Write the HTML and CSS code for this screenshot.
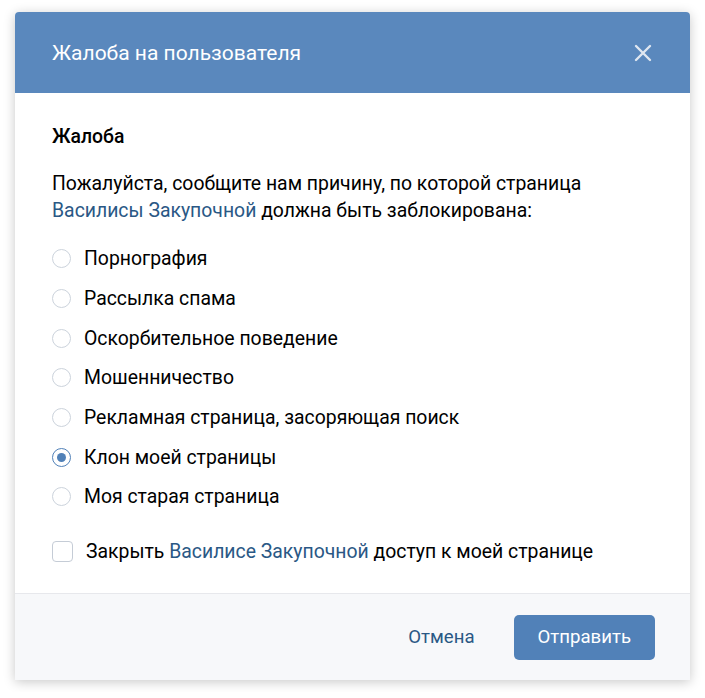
FILE: index.html
```html
<!DOCTYPE html>
<html lang="ru">

<head>
    <meta charset="UTF-8">
    <meta name="viewport" content="width=device-width, initial-scale=1.0">
    <title>Жалоба на пользователя</title>
    <link rel="stylesheet" href="styles.css">
</head>

<body>
    <div class="modal">
        <div class="modal-header">
            <h1>Жалоба на пользователя</h1>
            <button class="close" type="button" aria-label="Закрыть">
                <svg width="18" height="18" viewBox="0 0 18 18">
                    <path d="M2 2L16 16M16 2L2 16" stroke="#dfe7f1" stroke-width="2.4" stroke-linecap="round" />
                </svg>
            </button>
        </div>

        <div class="modal-body">
            <h2>Жалоба</h2>
            <p class="lead">
                Пожалуйста, сообщите нам причину, по которой страница
                <a href="#">Василисы Закупочной</a> должна быть заблокирована:
            </p>

            <form class="reasons">
                <label class="radio"><input type="radio" name="reason"><span class="dot"></span>Порнография</label>
                <label class="radio"><input type="radio" name="reason"><span class="dot"></span>Рассылка спама</label>
                <label class="radio"><input type="radio" name="reason"><span class="dot"></span>Оскорбительное поведение</label>
                <label class="radio"><input type="radio" name="reason"><span class="dot"></span>Мошенничество</label>
                <label class="radio"><input type="radio" name="reason"><span class="dot"></span>Рекламная страница, засоряющая поиск</label>
                <label class="radio"><input type="radio" name="reason" checked><span class="dot"></span>Клон моей страницы</label>
                <label class="radio"><input type="radio" name="reason"><span class="dot"></span>Моя старая страница</label>

                <label class="check"><input type="checkbox"><span class="box"></span>Закрыть&nbsp;<a href="#">Василисе Закупочной</a>&nbsp;доступ к моей странице</label>
            </form>
        </div>

        <div class="modal-footer">
            <button class="btn-link" type="button">Отмена</button>
            <button class="btn" type="button">Отправить</button>
        </div>
    </div>
</body>

</html>
```

FILE: styles.css
```css
body {
    margin: 0;
    padding: 12px 15px;
    background-color: #fff;
    font-family: Roboto, "Noto Sans", Arial, sans-serif;
    color: #000;
}

a {
    color: #2a5885;
    text-decoration: none;
}

.modal {
    width: 675px;
    height: 668px;
    display: flex;
    flex-direction: column;
    background: #fff;
    border-radius: 4px 4px 0 0;
    box-shadow: 0 2px 12px rgba(0, 0, 0, 0.22);
}

.modal-header {
    height: 81px;
    display: flex;
    align-items: center;
    justify-content: space-between;
    padding: 0 29px 0 37px;
    background-color: #5a88bd;
    border-radius: 4px 4px 0 0;
}

.modal-header h1 {
    margin: 0;
    font-size: 21px;
    font-weight: 400;
    color: #fff;
}

.close {
    width: 36px;
    height: 36px;
    display: flex;
    align-items: center;
    justify-content: center;
    padding: 0;
    border: none;
    background: none;
    cursor: pointer;
}

.modal-body {
    flex: 1;
    padding: 33px 37px 0;
}

.modal-body h2 {
    margin: 0;
    font-size: 19.4px;
    font-weight: 500;
    line-height: 22px;
}

.lead {
    margin: 22px 0 0;
    font-size: 19.4px;
    line-height: 27px;
}

.reasons {
    margin-top: 15px;
    display: flex;
    flex-direction: column;
}

.radio,
.check {
    display: flex;
    align-items: center;
    height: 39.7px;
    font-size: 19.4px;
    cursor: pointer;
}

.radio input,
.check input {
    display: none;
}

.dot {
    width: 17px;
    height: 17px;
    margin-right: 13px;
    border: 1.5px solid #ccd3dc;
    border-radius: 50%;
    flex-shrink: 0;
    position: relative;
}

.radio input:checked + .dot {
    border-color: #5181b8;
}

.radio input:checked + .dot::after {
    content: "";
    position: absolute;
    top: 4px;
    left: 4px;
    width: 9px;
    height: 9px;
    border-radius: 50%;
    background: #5181b8;
}

.check {
    margin-top: 15px;
}

.box {
    width: 19px;
    height: 19px;
    margin-right: 13px;
    border: 1.5px solid #c5ccd6;
    border-radius: 4px;
    flex-shrink: 0;
}

.modal-footer {
    height: 86px;
    display: flex;
    align-items: center;
    justify-content: flex-end;
    gap: 18px;
    padding: 0 35px;
    border-top: 1px solid #e7e8ec;
    background-color: #f7f8fa;
}

.btn-link {
    padding: 12px 21px;
    font: inherit;
    font-size: 18.6px;
    color: #2a5885;
    background: none;
    border: none;
    cursor: pointer;
}

.btn {
    height: 45px;
    padding: 0 24px;
    font: inherit;
    font-size: 18.6px;
    color: #fff;
    background-color: #5181b8;
    border: none;
    border-radius: 5px;
    cursor: pointer;
}
```
